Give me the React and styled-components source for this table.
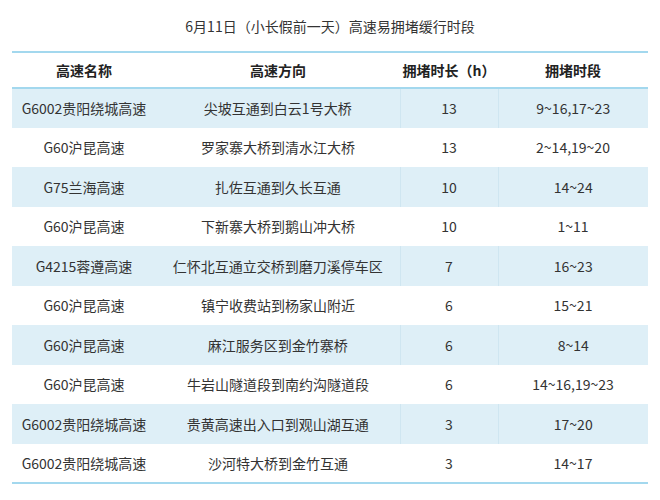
import styled, { createGlobalStyle } from 'styled-components';

const GlobalStyle = createGlobalStyle`
	body {
		margin: 0;
		background: #ffffff;
		font-family: "Noto Sans CJK SC", "Noto Sans", sans-serif;
		color: #333333;
	}
`;

const Page = styled.div`
	width: 660px;
	padding: 0 12px;
	box-sizing: border-box;
`;

const Title = styled.div`
	height: 51px;
	display: flex;
	align-items: center;
	justify-content: center;
	font-size: 14px;
	color: #333333;
`;

const Table = styled.table`
	width: 636px;
	border-collapse: collapse;
	table-layout: fixed;
	border-top: 2px solid #a3d8ee;
	border-bottom: 2px solid #a3d8ee;
`;

const HeadCell = styled.th`
	height: 34px;
	padding: 0;
	font-size: 14px;
	font-weight: 700;
	color: #222222;
	text-align: center;
	border-bottom: 2px solid #a3d8ee;
`;

const Row = styled.tr`
	height: 39.5px;
	background: ${(p) => (p.$shaded ? '#deeff7' : '#ffffff')};
`;

const Cell = styled.td`
	padding: 0;
	font-size: 14px;
	text-align: center;
	white-space: nowrap;
	border-left: ${(p) => (p.$divider && p.$shaded ? '1px solid #cfe6f1' : 'none')};
`;

const columns = [
	{ title: '高速名称', width: 144 },
	{ title: '高速方向', width: 244 },
	{ title: '拥堵时长（h）', width: 98 },
	{ title: '拥堵时段', width: 150 },
];

const rows = [
	['G6002贵阳绕城高速', '尖坡互通到白云1号大桥', '13', '9~16,17~23'],
	['G60沪昆高速', '罗家寨大桥到清水江大桥', '13', '2~14,19~20'],
	['G75兰海高速', '扎佐互通到久长互通', '10', '14~24'],
	['G60沪昆高速', '下新寨大桥到鹅山冲大桥', '10', '1~11'],
	['G4215蓉遵高速', '仁怀北互通立交桥到磨刀溪停车区', '7', '16~23'],
	['G60沪昆高速', '镇宁收费站到杨家山附近', '6', '15~21'],
	['G60沪昆高速', '麻江服务区到金竹寨桥', '6', '8~14'],
	['G60沪昆高速', '牛岩山隧道段到南约沟隧道段', '6', '14~16,19~23'],
	['G6002贵阳绕城高速', '贵黄高速出入口到观山湖互通', '3', '17~20'],
	['G6002贵阳绕城高速', '沙河特大桥到金竹互通', '3', '14~17'],
];

const App = () => {
	return (
		<Page>
			<GlobalStyle />
			<Title>6月11日（小长假前一天）高速易拥堵缓行时段</Title>
			<Table>
				<colgroup>
					{columns.map((c) => (
						<col key={c.title} style={{ width: c.width }} />
					))}
				</colgroup>
				<thead>
					<tr>
						{columns.map((c) => (
							<HeadCell key={c.title}>{c.title}</HeadCell>
						))}
					</tr>
				</thead>
				<tbody>
					{rows.map((r, i) => {
						const shaded = i % 2 === 0;
						return (
							<Row key={i} $shaded={shaded}>
								{r.map((v, j) => (
									<Cell key={j} $shaded={shaded} $divider={j >= 2}>
										{v}
									</Cell>
								))}
							</Row>
						);
					})}
				</tbody>
			</Table>
		</Page>
	);
};

export default App;
